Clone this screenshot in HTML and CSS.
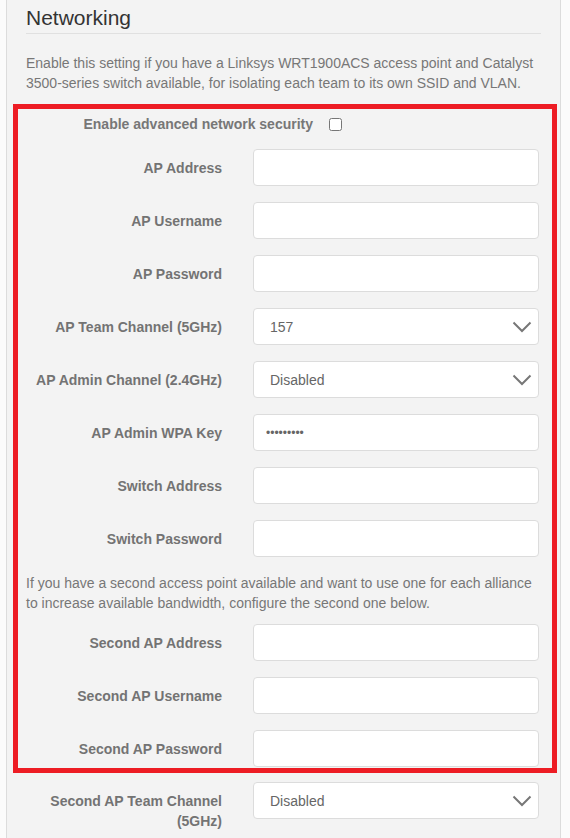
FILE: index.html
```html
<!DOCTYPE html>
<html>
<head>
<meta charset="utf-8">
<link rel="stylesheet" href="styles.css">
</head>
<body>
<div class="panel">
  <h3 class="title">Networking</h3>
  <p class="desc">Enable this setting if you have a Linksys WRT1900ACS access point and Catalyst 3500-series switch available, for isolating each team to its own SSID and VLAN.</p>
  <div class="highlight">
    <div class="check-row">
      <label class="check-label" for="adv">Enable advanced network security</label>
      <input type="checkbox" id="adv" class="check">
    </div>
    <div class="row"><label class="lbl">AP Address</label><input class="ctl" type="text"></div>
    <div class="row"><label class="lbl">AP Username</label><input class="ctl" type="text"></div>
    <div class="row"><label class="lbl">AP Password</label><input class="ctl" type="text"></div>
    <div class="row"><label class="lbl">AP Team Channel (5GHz)</label>
      <div class="sel-wrap"><select class="ctl sel"><option>157</option></select>
        <svg class="chev" width="20" height="12" viewBox="0 0 20 12"><polyline points="1.5,1.5 10,10 18.5,1.5" fill="none" stroke="#777" stroke-width="2"/></svg></div></div>
    <div class="row"><label class="lbl">AP Admin Channel (2.4GHz)</label>
      <div class="sel-wrap"><select class="ctl sel"><option>Disabled</option></select>
        <svg class="chev" width="20" height="12" viewBox="0 0 20 12"><polyline points="1.5,1.5 10,10 18.5,1.5" fill="none" stroke="#777" stroke-width="2"/></svg></div></div>
    <div class="row"><label class="lbl">AP Admin WPA Key</label><input class="ctl pw" type="password" value="password1"></div>
    <div class="row"><label class="lbl">Switch Address</label><input class="ctl" type="text"></div>
    <div class="row"><label class="lbl">Switch Password</label><input class="ctl" type="text"></div>
    <p class="desc2">If you have a second access point available and want to use one for each alliance to increase available bandwidth, configure the second one below.</p>
    <div class="row"><label class="lbl">Second AP Address</label><input class="ctl" type="text"></div>
    <div class="row"><label class="lbl">Second AP Username</label><input class="ctl" type="text"></div>
    <div class="row last"><label class="lbl">Second AP Password</label><input class="ctl" type="text"></div>
  </div>
  <div class="row after"><label class="lbl">Second AP Team Channel (5GHz)</label>
    <div class="sel-wrap"><select class="ctl sel"><option>Disabled</option></select>
      <svg class="chev" width="20" height="12" viewBox="0 0 20 12"><polyline points="1.5,1.5 10,10 18.5,1.5" fill="none" stroke="#777" stroke-width="2"/></svg></div></div>
</div>
</body>
</html>
```

FILE: styles.css
```css
html, body {
  margin: 0;
  padding: 0;
  background: #fbfbfb;
  font-family: "Liberation Sans", Arial, sans-serif;
  font-size: 14px;
  line-height: 20px;
  color: #777;
}
.panel {
  margin-left: 6px;
  width: 515px;
  min-height: 832px;
  background: #f3f3f3;
  border-left: 1px solid #dcdcdc;
  border-right: 1px solid #dcdcdc;
  padding: 6px 19px 0 19px;
}
.title {
  margin: 0;
  font-size: 21px;
  line-height: 24px;
  font-weight: normal;
  color: #333;
  padding-bottom: 3px;
  border-bottom: 1px solid #e0e0e0;
}
.desc {
  margin: 19px 0 11px 0;
}
.highlight {
  margin: 0 -16px 0 -13px;
  border: 5px solid #ed1c24;
  padding: 5px 11px 1px 8px;
}
.check-row {
  display: grid;
  grid-template-columns: 287px 13px;
  column-gap: 16px;
  align-items: center;
  height: 20px;
  margin-bottom: 15px;
}
.check-label {
  text-align: right;
  font-weight: bold;
}
.check {
  width: 13px;
  height: 13px;
  margin: 0;
}
.row {
  display: grid;
  grid-template-columns: 196px 286px;
  column-gap: 31px;
  align-items: start;
  margin-bottom: 16px;
}
.row.last {
  margin-bottom: 0;
}
.row.after {
  margin-top: 9px;
}
.lbl {
  text-align: right;
  font-weight: bold;
  padding-top: 9px;
  color: #737373;
}
.ctl {
  box-sizing: border-box;
  width: 286px;
  height: 37px;
  margin: 0;
  border: 1px solid #dcdcdc;
  border-radius: 4px;
  background: #fff;
  padding: 0 12px;
  font-family: "Liberation Sans", Arial, sans-serif;
  font-size: 14px;
  color: #555;
  outline: none;
}
.pw {
  font-size: 12px;
  letter-spacing: 0;
  color: #666;
}
.sel-wrap {
  position: relative;
  width: 286px;
  height: 37px;
}
.sel {
  -webkit-appearance: none;
  appearance: none;
  padding-left: 16px;
  color: #666;
}
.chev {
  position: absolute;
  right: 7px;
  top: 13px;
  pointer-events: none;
}
.desc2 {
  margin: 1px 0 11px 0;
}
```
